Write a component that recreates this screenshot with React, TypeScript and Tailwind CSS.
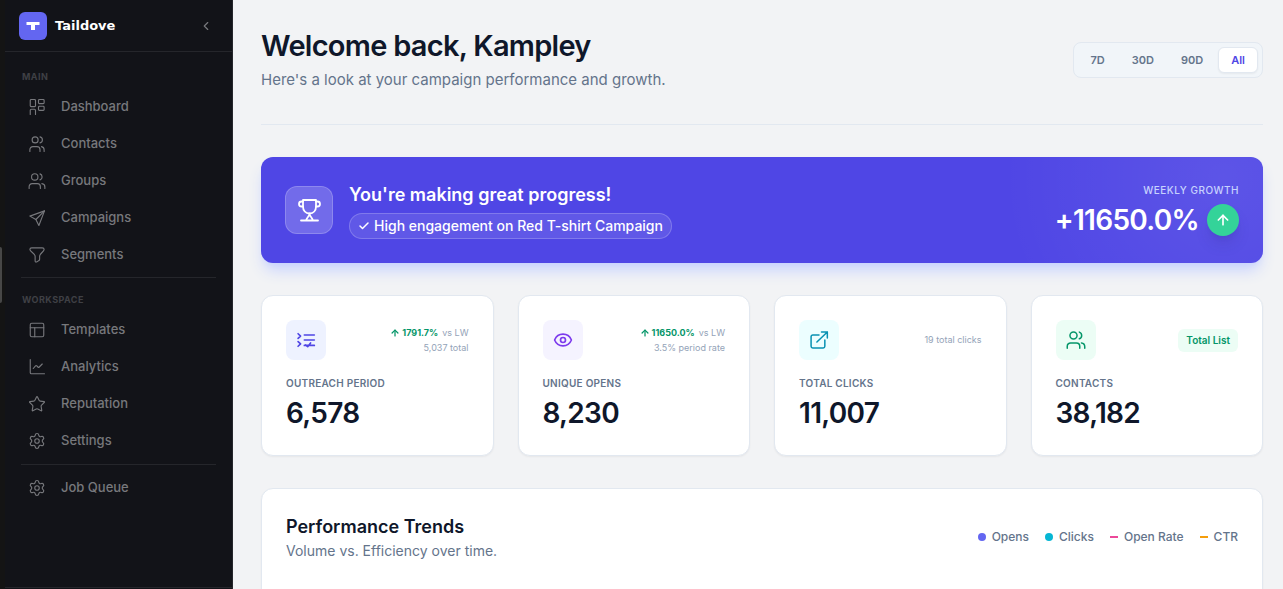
import type { ReactNode } from 'react'
import { ArrowUp, Check, ChevronLeft, Eye, PanelsTopLeft, Settings, Star } from 'lucide-react'

type IconProps = { size?: number; strokeWidth?: number }

function Svg({ size = 18, strokeWidth = 1.5, children }: IconProps & { children: ReactNode }) {
  return (
    <svg
      width={size}
      height={size}
      viewBox="0 0 24 24"
      fill="none"
      stroke="currentColor"
      strokeWidth={strokeWidth}
      strokeLinecap="round"
      strokeLinejoin="round"
      aria-hidden="true"
    >
      {children}
    </svg>
  )
}

function DashboardIcon(props: IconProps) {
  return (
    <Svg {...props}>
      <rect x="3" y="2" width="7" height="9.5" rx="1.2" />
      <rect x="14" y="2" width="7.5" height="5.5" rx="1.2" />
      <rect x="14" y="11" width="7.5" height="5.5" rx="1.2" />
      <path d="M3 22v-5.5A1.5 1.5 0 0 1 4.5 15h4a1.5 1.5 0 0 1 1.5 1.5V22" />
    </Svg>
  )
}

function ContactsIcon(props: IconProps) {
  return (
    <Svg {...props}>
      <circle cx="9.5" cy="6.5" r="4" />
      <path d="M2.500 22v-2.500a4 4 0 0 1 4-4h5.500a4 4 0 0 1 4 4V22" />
      <path d="M16 2.500a4.100 4.100 0 0 1 0 8" />
      <path d="M18 15.500a4.500 4.500 0 0 1 3.500 4.500v2" />
    </Svg>
  )
}

function UsersIcon(props: IconProps) {
  return (
    <Svg {...props}>
      <circle cx="9" cy="6.5" r="4.25" />
      <path d="M1.5 22v-2.5a4 4 0 0 1 4-4h7a4 4 0 0 1 4 4V22" />
      <path d="M16 2.5a4.25 4.25 0 0 1 0 8" />
      <path d="M18.5 15.5a4.5 4.5 0 0 1 4 4.5v2" />
    </Svg>
  )
}

function SendIcon(props: IconProps) {
  return (
    <Svg {...props}>
      <path d="M22 2.500 2.500 9.500l8 4.500 4 8L22 2.500Z" />
      <path d="M22 2.500 10.500 14" />
    </Svg>
  )
}

function FunnelIcon(props: IconProps) {
  return (
    <Svg {...props}>
      <path d="M5 2.500h14c1.500 0 2.500.6 2.500 2 0 3-6 5.500-6 9v4c0 1-.4 1.600-1.200 2l-2.800 1.700c-1 .5-2-.1-2-1.200v-6.500c0-3.500-7-6-7-9 0-1.400 1-2 2.500-2Z" />
    </Svg>
  )
}

function ChartIcon(props: IconProps) {
  return (
    <Svg {...props}>
      <path d="M3 2v17.5A1.5 1.5 0 0 0 4.5 21H22" />
      <path d="m7 14 3-3.500c.6-.6 1.200-.6 1.800 0l1.400 1.500c.6.6 1.200.6 1.800 0l4-4" />
    </Svg>
  )
}

function TasksIcon(props: IconProps) {
  return (
    <Svg {...props}>
      <path d="m2.500 4.500 3 2.750-3 2.750M2.500 14l3 2.750-3 2.750" />
      <path d="M10 6h12M10 12h12M10 18.500h12M11.500 18l2.500 2 3.500-4.500" />
    </Svg>
  )
}

function ExternalIcon(props: IconProps) {
  return (
    <Svg {...props}>
      <path d="M12 6H4.5A2 2 0 0 0 2.5 8v11.500a2 2 0 0 0 2 2H17a2 2 0 0 0 2-2V12" />
      <path d="M9.500 14.500 22 2.500M15 2.500h7v7" />
    </Svg>
  )
}

function TrophyIcon(props: IconProps) {
  return (
    <Svg {...props}>
      <path d="M6 2h13v6.500c0 4-2.500 7-6.500 7S6 12.500 6 8.500V2Z" />
      <path d="M6 3.500H4.500a2.500 2.500 0 0 0 0 5H6M19 3.500h1.500a2.500 2.500 0 0 1 0 5H19" />
      <path d="M12.500 15.500c0 3-2.500 3.500-3.500 7M12.500 15.500c0 3 2.500 3.500 3.500 7M4 22.500h17" />
    </Svg>
  )
}

function LogoMark() {
  return (
    <span className="flex size-7 items-center justify-center rounded-md bg-[#6366f1]">
      <svg width="14" height="10" viewBox="0 0 14 10" fill="white" aria-hidden="true">
        <rect x="0.500" y="1" width="13" height="3" />
        <rect x="5" y="1" width="4" height="8" />
      </svg>
    </span>
  )
}

const mainNav = [
  { label: 'Dashboard', icon: <DashboardIcon /> },
  { label: 'Contacts', icon: <ContactsIcon /> },
  { label: 'Groups', icon: <UsersIcon /> },
  { label: 'Campaigns', icon: <SendIcon /> },
  { label: 'Segments', icon: <FunnelIcon /> },
]

const workspaceNav = [
  { label: 'Templates', icon: <PanelsTopLeft size={18} strokeWidth={1.5} /> },
  { label: 'Analytics', icon: <ChartIcon /> },
  { label: 'Reputation', icon: <Star size={18} strokeWidth={1.5} /> },
  { label: 'Settings', icon: <Settings size={18} strokeWidth={1.5} /> },
]

const queueNav = [{ label: 'Job Queue', icon: <Settings size={18} strokeWidth={1.5} /> }]

function NavHeading({ children }: { children: ReactNode }) {
  return <h2 className="mb-[3px] pl-px text-[9px] leading-4 font-bold tracking-wider text-[#3f4045]">{children}</h2>
}

function NavList({ items }: { items: { label: string; icon: ReactNode }[] }) {
  return (
    <ul>
      {items.map(item => (
        <li key={item.label}>
          <a href="#" className="flex h-[37px] items-center gap-[15px] pl-[7px] text-[13px] font-medium text-[#77787c]">
            {item.icon}
            {item.label}
          </a>
        </li>
      ))}
    </ul>
  )
}

function Sidebar() {
  return (
    <aside className="relative flex w-[233px] shrink-0 bg-[#141414]">
      {/* Edge handle */}
      <div className="absolute top-[247px] left-0 h-14 w-0.5 rounded-r bg-[#474747]" />
      <div className="ml-[5px] flex flex-1 flex-col border-r border-[#25262b] bg-[#121318]">
        <div className="flex h-[52px] items-center border-b border-[#25262b] pr-[19px] pl-3.5">
          <LogoMark />
          <span className="ml-2 flex-1 font-['DejaVu_Sans',sans-serif] text-[13px] font-bold text-white">Taildove</span>
          <button type="button" aria-label="Collapse sidebar" className="text-[#77787c]">
            <ChevronLeft size={14} />
          </button>
        </div>
        <nav className="flex-1 px-4 pt-[17px]">
          <NavHeading>MAIN</NavHeading>
          <NavList items={mainNav} />
          <hr className="mt-1 mb-3.5 border-[#25262b]" />
          <NavHeading>WORKSPACE</NavHeading>
          <NavList items={workspaceNav} />
          <hr className="mt-[5px] mb-1 border-[#25262b]" />
          <NavList items={queueNav} />
        </nav>
        <div className="h-0.5 border-t border-[#25262b]" />
      </div>
    </aside>
  )
}

function RangeSwitch() {
  return (
    <div className="flex items-center gap-[3px] rounded-lg border border-[#e2e8f0] bg-[#f1f5f9] p-1 text-[11px] font-semibold text-[#64748b]">
      {['7D', '30D', '90D'].map(range => (
        <button key={range} type="button" className="h-[26px] px-3">
          {range}
        </button>
      ))}
      <button type="button" className="h-[26px] rounded-md border border-[#e2e8f0] bg-white px-3 text-[#4f46e5] shadow-xs">
        All
      </button>
    </div>
  )
}

function Banner() {
  return (
    <section className="mt-8 flex items-center justify-between rounded-xl bg-[#4f46e5] bg-[radial-gradient(circle_at_96%_20%,rgba(255,255,255,0.08),transparent_220px)] p-6 text-white shadow-lg shadow-[#c7d2fe]">
      <div className="flex items-center gap-4">
        <div className="flex size-12 items-center justify-center rounded-xl border border-white/20 bg-white/20">
          <TrophyIcon size={24} strokeWidth={1.8} />
        </div>
        <div>
          <h2 className="text-lg leading-7 font-semibold">You're making great progress!</h2>
          <p className="mt-1 flex h-[26px] items-center gap-1 rounded-full border border-white/20 bg-white/10 px-2 text-sm font-medium">
            <Check size={12} strokeWidth={3} />
            High engagement on Red T-shirt Campaign
          </p>
        </div>
      </div>
      <div className="flex flex-col items-end gap-1">
        <p className="text-[10px] leading-4 font-medium tracking-wider text-[#c7d2fe]">WEEKLY GROWTH</p>
        <div className="flex items-center gap-2">
          <span className="text-[28px] leading-9 font-semibold tracking-tight">+11650.0%</span>
          <span className="flex size-8 items-center justify-center rounded-full bg-[#34d399] shadow-lg shadow-indigo-900/20">
            <ArrowUp size={16} strokeWidth={2.5} />
          </span>
        </div>
      </div>
    </section>
  )
}

function Trend({ change, note }: { change: string; note: string }) {
  return (
    <div className="text-right text-[9px] leading-[15px] text-[#94a3b8]">
      <p className="flex items-center justify-end gap-1">
        <span className="flex items-center gap-0.5 font-bold text-[#059669]">
          <ArrowUp size={10} strokeWidth={3} />
          {change}
        </span>
        <span>vs LW</span>
      </p>
      <p>{note}</p>
    </div>
  )
}

const stats = [
  {
    label: 'OUTREACH PERIOD',
    value: '6,578',
    tint: 'bg-[#eef2ff] text-[#4f46e5]',
    icon: <TasksIcon size={20} strokeWidth={2} />,
    aside: <Trend change="1791.7%" note="5,037 total" />,
  },
  {
    label: 'UNIQUE OPENS',
    value: '8,230',
    tint: 'bg-[#f5f3ff] text-[#7c3aed]',
    icon: <Eye size={20} strokeWidth={2} />,
    aside: <Trend change="11650.0%" note="3.5% period rate" />,
  },
  {
    label: 'TOTAL CLICKS',
    value: '11,007',
    tint: 'bg-[#ecfeff] text-[#0891b2]',
    icon: <ExternalIcon size={20} strokeWidth={1.8} />,
    aside: <span className="text-[9px] text-[#94a3b8]">19 total clicks</span>,
  },
  {
    label: 'CONTACTS',
    value: '38,182',
    tint: 'bg-[#ecfdf5] text-[#059669]',
    icon: <UsersIcon size={20} strokeWidth={1.8} />,
    aside: (
      <span className="rounded-md bg-[#ecfdf5] px-2 py-1 text-[10px] leading-[15px] font-semibold text-[#059669]">
        Total List
      </span>
    ),
  },
]

function StatCards() {
  return (
    <section className="mt-8 grid grid-cols-4 gap-6">
      {stats.map(stat => (
        <div key={stat.label} className="rounded-xl border border-[#e2e8f0] bg-white p-6 shadow-xs">
          <div className="flex items-center justify-between">
            <div className={`flex size-10 items-center justify-center rounded-lg ${stat.tint}`}>{stat.icon}</div>
            {stat.aside}
          </div>
          <h3 className="mt-4 text-[10px] leading-[15px] font-semibold tracking-wide text-[#64748b]">{stat.label}</h3>
          <p className="mt-1 text-[28px] leading-9 font-semibold tracking-tight text-[#0f172a]">{stat.value}</p>
        </div>
      ))}
    </section>
  )
}

const legend = [
  { label: 'Opens', mark: 'h-2 rounded-full bg-[#6366f1]' },
  { label: 'Clicks', mark: 'h-2 rounded-full bg-[#06b6d4]' },
  { label: 'Open Rate', mark: 'h-0.5 bg-[#ec4899]' },
  { label: 'CTR', mark: 'h-0.5 bg-[#f59e0b]' },
]

function Trends() {
  return (
    <section className="mt-8 flex min-h-96 items-start justify-between rounded-xl border border-[#e2e8f0] bg-white p-6 shadow-xs">
      <div>
        <h2 className="text-lg leading-7 font-semibold text-[#0f172a]">Performance Trends</h2>
        <p className="text-sm leading-5 text-[#64748b]">Volume vs. Efficiency over time.</p>
      </div>
      <ul className="mt-4 flex items-center gap-4 text-xs font-medium text-[#64748b]">
        {legend.map(item => (
          <li key={item.label} className="flex items-center gap-1.5">
            <span className={`w-2 ${item.mark}`} />
            {item.label}
          </li>
        ))}
      </ul>
    </section>
  )
}

export default function App() {
  return (
    <div className="flex h-screen overflow-hidden bg-[#f2f3f5] font-['Inter',sans-serif]">
      <Sidebar />
      <main className="flex-1 overflow-hidden pt-7 pr-5 pl-7">
        <header className="flex items-start justify-between border-b border-[#e2e8f0] pb-8">
          <div>
            <h1 className="text-[29px] leading-9 font-semibold tracking-tight text-[#0f172a]">Welcome back, Kampley</h1>
            <p className="mt-1 text-[15px] leading-6 text-[#64748b]">Here's a look at your campaign performance and growth.</p>
          </div>
          <div className="mt-3.5">
            <RangeSwitch />
          </div>
        </header>
        <Banner />
        <StatCards />
        <Trends />
      </main>
    </div>
  )
}
